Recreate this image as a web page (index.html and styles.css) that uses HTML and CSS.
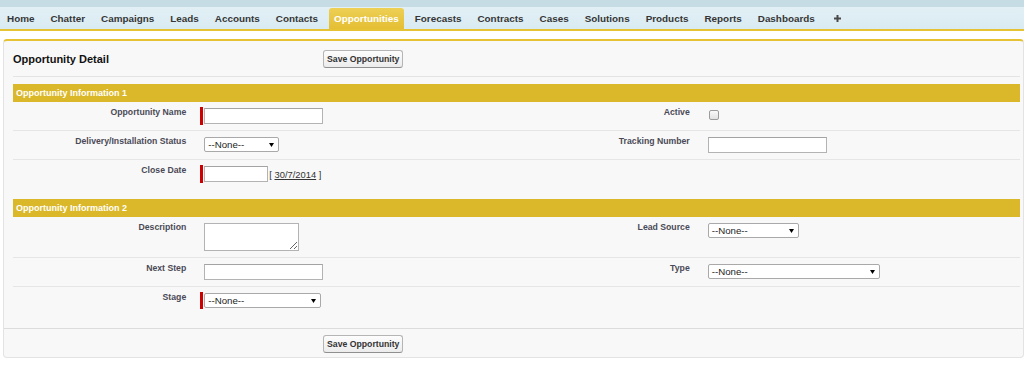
FILE: index.html
```html
<!doctype html>
<html>
  <head>
    <meta charset="UTF-8" />
    <title>Opportunity Detail</title>
    <link rel="stylesheet" href="styles.css">
  </head>
  <body>
    <div class="top-strip"></div>
    <ul class="tabs">
      <li class="tab">Home</li>
      <li class="tab">Chatter</li>
      <li class="tab">Campaigns</li>
      <li class="tab">Leads</li>
      <li class="tab">Accounts</li>
      <li class="tab">Contacts</li>
      <li class="tab active">Opportunities</li>
      <li class="tab">Forecasts</li>
      <li class="tab">Contracts</li>
      <li class="tab">Cases</li>
      <li class="tab">Solutions</li>
      <li class="tab">Products</li>
      <li class="tab">Reports</li>
      <li class="tab">Dashboards</li>
      <li class="tab tab-plus">
        <svg width="7" height="7" viewBox="0 0 7 7"><path d="M2.5 0h2v7h-2zM0 2.5h7v2H0z" fill="#4a4a4a"/></svg>
      </li>
    </ul>

    <div class="panel">
      <div class="bar bar-header">
        <h2 class="panel-title">Opportunity Detail</h2>
        <button class="btn">Save Opportunity</button>
      </div>

      <div class="section">
        <h3 class="section-title">Opportunity Information 1</h3>
        <div class="row">
          <div class="label">Opportunity Name</div>
          <div class="field">
            <span class="required"><input class="input" type="text" /></span>
          </div>
          <div class="label">Active</div>
          <div class="field"><input class="checkbox" type="checkbox" /></div>
        </div>
        <div class="row">
          <div class="label">Delivery/Installation Status</div>
          <div class="field">
            <div class="select select-sm"><span>--None--</span><svg width="5" height="4" viewBox="0 0 5 4"><path d="M0 0h5L2.5 4z" fill="#000"/></svg></div>
          </div>
          <div class="label">Tracking Number</div>
          <div class="field"><input class="input" type="text" /></div>
        </div>
        <div class="row">
          <div class="label">Close Date</div>
          <div class="field">
            <span class="required"><input class="input input-date" type="text" /></span>
            <span class="date-link">[ <a href="#">30/7/2014</a> ]</span>
          </div>
          <div class="label"></div>
          <div class="field"></div>
        </div>
      </div>

      <div class="section section-last">
        <h3 class="section-title">Opportunity Information 2</h3>
        <div class="row">
          <div class="label">Description</div>
          <div class="field"><textarea class="textarea"></textarea></div>
          <div class="label">Lead Source</div>
          <div class="field">
            <div class="select select-md"><span>--None--</span><svg width="5" height="4" viewBox="0 0 5 4"><path d="M0 0h5L2.5 4z" fill="#000"/></svg></div>
          </div>
        </div>
        <div class="row">
          <div class="label">Next Step</div>
          <div class="field"><input class="input" type="text" /></div>
          <div class="label">Type</div>
          <div class="field">
            <div class="select select-lg"><span>--None--</span><svg width="5" height="4" viewBox="0 0 5 4"><path d="M0 0h5L2.5 4z" fill="#000"/></svg></div>
          </div>
        </div>
        <div class="row">
          <div class="label">Stage</div>
          <div class="field">
            <span class="required">
              <div class="select select-stage"><span>--None--</span><svg width="5" height="4" viewBox="0 0 5 4"><path d="M0 0h5L2.5 4z" fill="#000"/></svg></div>
            </span>
          </div>
          <div class="label"></div>
          <div class="field"></div>
        </div>
      </div>

      <div class="footer">
        <div class="bar">
          <span></span>
          <button class="btn">Save Opportunity</button>
        </div>
      </div>
    </div>
  </body>
</html>
```

FILE: styles.css
```css
body {
  margin: 0;
  background-color: #fff;
  font-family: "Liberation Sans", Arial, sans-serif;
  color: #222;
}

/* tab bar */
.top-strip {
  height: 7px;
  background-color: #c6dce4;
}

.tabs {
  display: flex;
  align-items: flex-end;
  height: 22px;
  margin: 0;
  padding: 0;
  list-style: none;
  background: linear-gradient(#e2f0f5, #d9ebf2);
  border-bottom: 2px solid #e6c235;
}

.tab {
  height: 21px;
  line-height: 21px;
  margin: 0 3px;
  padding: 0 5px;
  font-size: 9.9px;
  font-weight: bold;
  color: #363636;
  white-space: nowrap;
}

.tab:first-child {
  margin-left: 2px;
}

.tab.active {
  color: #fff;
  background: linear-gradient(#eed055, #e4be33);
  border-radius: 3px 3px 0 0;
}

.tab-plus {
  display: flex;
  align-items: center;
  padding-left: 8px;
}

/* detail panel */
.panel {
  margin: 8px 0 0 3px;
  background-color: #f8f8f8;
  border: 1px solid #e3e3e3;
  border-top: 2px solid #e6c235;
  border-radius: 4px;
}

.bar {
  display: grid;
  grid-template-columns: 310px auto;
  align-items: center;
  justify-items: start;
}

.bar-header {
  margin: 0 3px 0 9px;
  padding: 9px 0 8px;
  border-bottom: 1px solid #e4e4e4;
}

.panel-title {
  margin: 0;
  font-size: 11px;
  font-weight: bold;
  color: #111;
}

.btn {
  height: 18px;
  padding: 0 3px;
  font-family: inherit;
  font-size: 8.7px;
  font-weight: bold;
  color: #333;
  background: linear-gradient(#fdfdfd, #ececec);
  border: 1px solid #b5b5b5;
  border-bottom-color: #8f8f8f;
  border-radius: 3px;
  cursor: pointer;
}

.section {
  margin: 7px 3px 0 9px;
}

.section + .section {
  margin-top: 11px;
}

.section-last {
  margin-bottom: 14px;
}

.section-title {
  margin: 0;
  height: 18px;
  line-height: 18px;
  padding-left: 3px;
  font-size: 9px;
  font-weight: bold;
  color: #fff;
  background-color: #dbb829;
}

.row {
  display: grid;
  grid-template-columns: 18% 32% 18% 32%;
  border-bottom: 1px solid #e6e6e6;
}

.row:last-child {
  border-bottom: none;
}

.label {
  padding: 5px 8px 0 2px;
  text-align: right;
  font-size: 8.7px;
  font-weight: bold;
  line-height: 11px;
  color: #4a4a56;
}

.field {
  display: flex;
  align-items: flex-start;
  padding: 6px 10px;
}

.required {
  display: inline-flex;
  margin: -1px 0 -1px -4px;
  padding: 1px 0 1px 1px;
  border-left: 3px solid #c00;
}

.input {
  display: block;
  width: 119px;
  height: 16px;
  margin: 0;
  padding: 0 2px;
  box-sizing: border-box;
  background-color: #fff;
  border: 1px solid #b3b3b3;
  border-top-color: #a3a3a3;
  font-family: inherit;
  font-size: 10px;
}

.input-date {
  width: 64px;
}

.date-link {
  align-self: center;
  margin-left: 1px;
  font-size: 9.4px;
  color: #333;
  white-space: nowrap;
}

.date-link a {
  color: #333;
}

.checkbox {
  appearance: none;
  width: 10px;
  height: 10px;
  margin: 2px 0 0 1px;
  background: linear-gradient(#fafafa, #e2e2e2);
  border: 1px solid #9c9c9c;
  border-radius: 2px;
}

.textarea {
  display: block;
  width: 95px;
  height: 28px;
  margin: 0;
  box-sizing: border-box;
  background-color: #fff;
  border: 1px solid #b3b3b3;
  font-family: inherit;
  font-size: 10px;
}

.select {
  display: flex;
  align-items: center;
  justify-content: space-between;
  height: 15px;
  padding: 0 4px 0 3px;
  box-sizing: border-box;
  background-color: #fff;
  border: 1px solid #a9a9a9;
  border-radius: 2px;
  font-size: 9.7px;
  color: #222;
}

.select-sm {
  width: 75px;
}

.select-md {
  width: 91px;
}

.select-lg {
  width: 172px;
}

.select-stage {
  width: 117px;
}

.footer {
  padding: 6px 3px 4px 9px;
  border-top: 1px solid #dcdcdc;
}
```
